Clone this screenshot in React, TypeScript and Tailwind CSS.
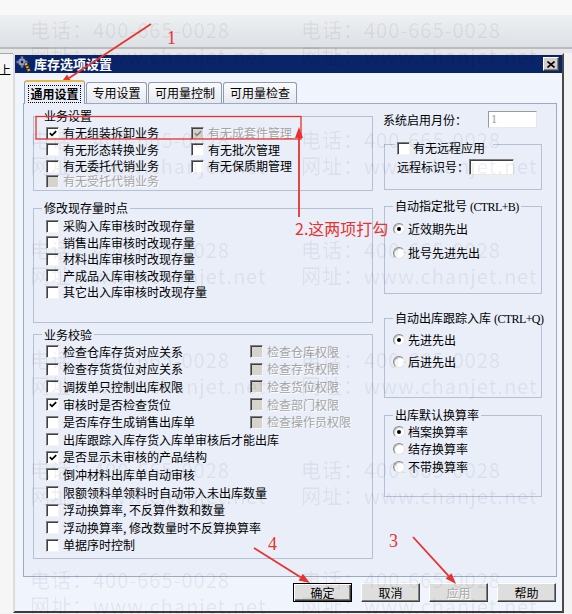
import React from 'react';

const RED = '#e8322e';

const Box: React.FC<{ checked?: boolean; disabled?: boolean }> = ({ checked, disabled }) => (
  <span
    className={`w-[13px] h-[13px] shrink-0 flex items-center justify-center border border-t-[#808080] border-l-[#808080] border-r-[#f4f4f4] border-b-[#f4f4f4] shadow-[inset_1px_1px_0_#404040] ${
      disabled ? 'bg-[#d6d3cc]' : 'bg-white'
    }`}
  >
    {checked && (
      <svg width="8" height="7" viewBox="0 0 8 7">
        <path d="M0.8 3.2 L3 5.4 L7.2 1.2" fill="none" stroke={disabled ? '#8a8a8a' : '#000'} strokeWidth="1.7" />
      </svg>
    )}
  </span>
);

const Check: React.FC<{ label: string; checked?: boolean; disabled?: boolean; className?: string }> = ({
  label,
  checked,
  disabled,
  className = '',
}) => (
  <div className={`flex items-center gap-[4px] whitespace-nowrap ${className}`}>
    <Box checked={checked} disabled={disabled} />
    <span className={disabled ? 'text-[#a3a3a3] [text-shadow:1px_1px_0_#fff]' : ''}>{label}</span>
  </div>
);

const Radio: React.FC<{ label: string; checked?: boolean; className?: string }> = ({ label, checked, className = '' }) => (
  <div className={`flex items-center gap-[3px] whitespace-nowrap ${className}`}>
    <span className="w-[12px] h-[12px] shrink-0 rounded-full bg-white border border-t-[#8a8a8a] border-l-[#8a8a8a] border-r-[#e4e4e4] border-b-[#e4e4e4] shadow-[inset_1px_1px_0_#c8c8c8] flex items-center justify-center">
      {checked && <span className="w-[4px] h-[4px] rounded-full bg-black" />}
    </span>
    <span>{label}</span>
  </div>
);

const Group: React.FC<{ title: React.ReactNode; className?: string; children: React.ReactNode }> = ({
  title,
  className = '',
  children,
}) => (
  <fieldset className={`border border-[#b3c0d6] min-w-0 ${className}`}>
    <legend className="ml-[8px] px-[2px] leading-[14px] whitespace-nowrap">{title}</legend>
    {children}
  </fieldset>
);

const Hotkey: React.FC<{ text: string; keys: string }> = ({ text, keys }) => (
  <span>
    {text}
    <span className="font-['Liberation_Serif',serif] text-[12px] tracking-[-0.6px] ml-[3px]">{keys}</span>
  </span>
);

const Button: React.FC<{ label: string; primary?: boolean; disabled?: boolean }> = ({ label, primary, disabled }) => (
  <div
    className={`w-[59px] h-[19px] flex items-center justify-center bg-[#dedede] ${
      primary
        ? 'border border-black shadow-[inset_1px_1px_0_#fff,inset_-1px_-1px_0_#404040,inset_-2px_-2px_0_#808080]'
        : 'border border-t-white border-l-white border-r-[#404040] border-b-[#404040] shadow-[inset_-1px_-1px_0_#808080]'
    } ${disabled ? 'text-[#a8a8a8] [text-shadow:1px_1px_0_#fff]' : 'text-black'}`}
  >
    {label}
  </div>
);

const checkRows: { label: string; checked?: boolean; h: string; right?: string }[] = [
  { label: '检查仓库存货对应关系', h: 'h-[17.6px]', right: '检查仓库权限' },
  { label: '检查存货货位对应关系', h: 'h-[17.6px]', right: '检查存货权限' },
  { label: '调拨单只控制出库权限', h: 'h-[17.6px]', right: '检查货位权限' },
  { label: '审核时是否检查货位', checked: true, h: 'h-[17.6px]', right: '检查部门权限' },
  { label: '是否库存生成销售出库单', h: 'h-[17.6px]', right: '检查操作员权限' },
  { label: '出库跟踪入库存货入库单审核后才能出库', h: 'h-[17.6px]' },
  { label: '是否显示未审核的产品结构', checked: true, h: 'h-[17.6px]' },
  { label: '倒冲材料出库单自动审核', h: 'h-[17.6px]' },
  { label: '限额领料单领料时自动带入未出库数量', h: 'h-[17.6px]' },
  { label: '浮动换算率, 不反算件数和数量', h: 'h-[17.6px]' },
  { label: '浮动换算率, 修改数量时不反算换算率', h: 'h-[17.6px]' },
  { label: '单据序时控制', h: 'h-[17.6px]' },
];

const stockRows = ['采购入库审核时改现存量', '销售出库审核时改现存量', '材料出库审核时改现存量', '产成品入库审核改现存量', '其它出入库审核时改现存量'];

const Arrow: React.FC<{ x1: number; y1: number; x2: number; y2: number }> = ({ x1, y1, x2, y2 }) => {
  const a = Math.atan2(y2 - y1, x2 - x1);
  const len = 11;
  const w = 4;
  const bx = x2 - len * Math.cos(a);
  const by = y2 - len * Math.sin(a);
  const px = -Math.sin(a) * w;
  const py = Math.cos(a) * w;
  return (
    <g>
      <line x1={x1} y1={y1} x2={bx} y2={by} stroke={RED} strokeWidth={1.8} />
      <polygon points={`${x2},${y2} ${bx + px},${by + py} ${bx - px},${by - py}`} fill={RED} />
    </g>
  );
};

const TitleIcon = () => (
  <svg width="16" height="16" viewBox="0 0 16 16">
    <g fill="#9aa3c8" stroke="#4a4f7a" strokeWidth="0.6">
      <rect x="5" y="0.5" width="2" height="2.5" />
      <rect x="5" y="9" width="2" height="2.5" />
      <rect x="0.5" y="5" width="2.5" height="2" />
      <rect x="9" y="5" width="2.5" height="2" />
      <circle cx="6" cy="6" r="3.8" />
    </g>
    <circle cx="6" cy="6" r="1.4" fill="#0a246a" />
    <g transform="rotate(-25 11.5 11.5)">
      <rect x="10" y="6.5" width="3" height="9" fill="#e9c23a" stroke="#3a2a10" strokeWidth="0.6" />
      <rect x="10" y="9" width="3" height="1.3" fill="#3a2a10" />
      <rect x="10" y="12" width="3" height="1.3" fill="#3a2a10" />
    </g>
  </svg>
);

const Watermark = () => (
  <div className="absolute inset-0 pointer-events-none flex flex-col pt-[17px] text-[20px] leading-[26px] tracking-[1px] text-black/[0.07] font-['Noto_Sans_CJK_SC',sans-serif]">
    {[0, 1, 2, 3, 4, 5].map((i) => (
      <div key={i} className="h-[110px] shrink-0 pl-[30px]">
        <div className="flex">
          <span className="w-[271px] shrink-0">电话：400-665-0028</span>
          <span>电话：400-665-0028</span>
        </div>
        <div className="flex">
          <span className="w-[271px] shrink-0">网址：www.chanjet.net</span>
          <span>网址：www.chanjet.net</span>
        </div>
      </div>
    ))}
  </div>
);

const Annotations = () => (
  <div className="absolute inset-0 pointer-events-none">
    <svg width="572" height="614" className="absolute inset-0">
      <rect x="36" y="116.5" width="265" height="22.5" fill="none" stroke={RED} strokeWidth="1.3" />
      <Arrow x1={151} y1={24} x2={60} y2={84} />
      <Arrow x1={299} y1={217} x2={299} y2={127} />
      <Arrow x1={413} y1={537} x2={456} y2={584} />
      <Arrow x1={254} y1={548} x2={310} y2={583} />
    </svg>
    <span className="absolute left-[167px] top-[28px] text-[18px] leading-[20px] font-['Liberation_Serif',serif] text-[#e8322e]">1</span>
    <span className="absolute left-[295px] top-[218px] text-[16px] leading-[20px] text-[#e8322e] font-['Noto_Sans_CJK_SC',sans-serif]">
      2.这两项打勾
    </span>
    <span className="absolute left-[389px] top-[531px] text-[18px] leading-[20px] font-['Liberation_Serif',serif] text-[#e8322e]">3</span>
    <span className="absolute left-[268px] top-[534px] text-[18px] leading-[20px] font-['Liberation_Serif',serif] text-[#e8322e]">4</span>
  </div>
);

export default function App() {
  return (
    <div className="relative w-[572px] h-[614px] overflow-hidden bg-[#f3f3f3] text-[12px] text-black font-['Noto_Sans_CJK_SC',sans-serif]">
      <div className="h-[15px] bg-[#f8f8f8]" />
      <div className="h-[32px] bg-linear-to-b from-[#eef0f2] to-[#dde1e5]" />
      <div className="h-[2px] bg-[#b8bcc0]" />
      <div className="h-[4px] bg-[#e7e7e7]" />

      <div className="flex">
        <div className="w-[13px] h-[560px] border-t border-[#a8a8a8] bg-[#f6f6f6] pt-[9px] leading-[14px] overflow-hidden">
          <span className="-ml-[1px]">上</span>
        </div>

        {/* dialog */}
        <div className="w-[551px] h-[560px] flex flex-col border-2 border-t-[#e4e4e4] border-l-[#dcdcdc] border-r-[#4a4a4a] border-b-[#3c3c3c] bg-[#f0f4fc]">
          <div className="h-[18px] shrink-0 bg-[#0a246a] flex items-center pl-[1px] pr-[3px]">
            <TitleIcon />
            <span className="ml-[2px] text-white font-bold text-[13px] leading-[18px]">库存选项设置</span>
            <div className="ml-auto w-[16px] h-[14px] bg-[#d4d0c8] border border-t-white border-l-white border-r-[#404040] border-b-[#404040] shadow-[inset_-1px_-1px_0_#808080] flex items-center justify-center">
              <svg width="8" height="7" viewBox="0 0 8 7">
                <path d="M0.5 0.5 L7.5 6.5 M7.5 0.5 L0.5 6.5" stroke="#000" strokeWidth="1.6" />
              </svg>
            </div>
          </div>

          <div className="flex-1 flex flex-col pl-[8px] pr-[5px] pt-[7px]">
            {/* tabs */}
            <div className="flex items-end gap-[1px] h-[23px] ml-[1px] relative z-10">
              <div className="w-[61px] h-[24px] -mb-[1px] bg-[#e9eef9] border border-b-0 border-[#919bae] border-t-2 border-t-[#e6b84a] rounded-t-[3px] flex items-center justify-center pt-[1px]">
                <span className="border border-dotted border-black px-[1px] font-bold leading-[16px]">通用设置</span>
              </div>
              <div className="w-[61px] h-[21px] bg-linear-to-b from-[#fbfbfd] to-[#e6e9f0] border border-b-0 border-[#919bae] rounded-t-[3px] flex items-center justify-center">
                专用设置
              </div>
              <div className="w-[74px] h-[21px] bg-linear-to-b from-[#fbfbfd] to-[#e6e9f0] border border-b-0 border-[#919bae] rounded-t-[3px] flex items-center justify-center">
                可用量控制
              </div>
              <div className="w-[74px] h-[21px] bg-linear-to-b from-[#fbfbfd] to-[#e6e9f0] border border-b-0 border-[#919bae] rounded-t-[3px] flex items-center justify-center">
                可用量检查
              </div>
            </div>

            {/* panel */}
            <div className="h-[474px] border border-[#9caac0] bg-[#e9eef9] flex gap-[11px] pl-[9px]">
              {/* left column */}
              <div className="w-[340px] flex flex-col pt-[5px]">
                <Group title="业务设置">
                  <div className="pl-[12px] pt-[2px] pb-[2px]">
                    <div className="flex h-[16px] items-center">
                      <Check label="有无组装拆卸业务" checked className="w-[145px]" />
                      <Check label="有无成套件管理" checked disabled />
                    </div>
                    <div className="flex h-[17px] items-center">
                      <Check label="有无形态转换业务" className="w-[145px]" />
                      <Check label="有无批次管理" />
                    </div>
                    <div className="flex h-[16px] items-center">
                      <Check label="有无委托代销业务" className="w-[145px]" />
                      <Check label="有无保质期管理" />
                    </div>
                    <div className="flex h-[14px] items-center">
                      <Check label="有无受托代销业务" disabled />
                    </div>
                  </div>
                </Group>

                <Group title="修改现存量时点" className="mt-[10px]">
                  <div className="pl-[12px] pt-[3px] pb-[21px]">
                    {stockRows.map((r) => (
                      <Check key={r} label={r} className="h-[16.5px]" />
                    ))}
                  </div>
                </Group>

                <Group title="业务校验" className="mt-[5px]">
                  <div className="pl-[12px] pt-[1.5px] pb-[4px]">
                    {checkRows.map((r) => (
                      <div key={r.label} className={`flex items-center ${r.h}`}>
                        <Check label={r.label} checked={r.checked} className="w-[204px]" />
                        {r.right && <Check label={r.right} disabled />}
                      </div>
                    ))}
                  </div>
                </Group>
              </div>

              {/* right column */}
              <div className="w-[158px] flex flex-col pt-[7px]">
                <div className="h-[17px] flex items-center justify-between pr-[5px] -ml-[1px]">
                  <span>系统启用月份：</span>
                  <span className="w-[49px] h-[17px] bg-white border border-t-[#9a9a9a] border-l-[#9a9a9a] border-r-[#e8e8e8] border-b-[#e8e8e8] text-[#9a9a9a] pl-[2px] leading-[15px] font-['Liberation_Serif',serif]">
                    1
                  </span>
                </div>

                <fieldset className="border border-[#b3c0d6] min-w-0 mt-[9px]">
                  <legend className="ml-[10px] pl-[2px] pr-[8px] leading-[14px] h-[14px]">
                    <span className="relative top-[4px] flex items-center gap-[3px]">
                      <Box />
                      <span>有无远程应用</span>
                    </span>
                  </legend>
                  <div className="pl-[12px] pt-[8px] pb-[14px]">
                    <div className="h-[16px] flex items-center">
                      <span>远程标识号：</span>
                      <span className="w-[45px] h-[16px] bg-white border border-t-[#808080] border-l-[#808080] border-r-[#e8e8e8] border-b-[#e8e8e8] shadow-[inset_1px_1px_0_#404040]" />
                    </div>
                  </div>
                </fieldset>

                <Group title={<Hotkey text="自动指定批号" keys="(CTRL+B)" />} className="mt-[9px]">
                  <div className="pl-[8px] pt-[7px] pb-[32px] flex flex-col gap-[8px]">
                    <Radio label="近效期先出" checked className="h-[16px]" />
                    <Radio label="批号先进先出" className="h-[16px]" />
                  </div>
                </Group>

                <Group title={<Hotkey text="自动出库跟踪入库" keys="(CTRL+Q)" />} className="mt-[17px]">
                  <div className="pl-[8px] pt-[6px] pb-[27px] flex flex-col gap-[6px]">
                    <Radio label="先进先出" checked className="h-[16px]" />
                    <Radio label="后进先出" className="h-[16px]" />
                  </div>
                </Group>

                <Group title="出库默认换算率" className="mt-[10px]">
                  <div className="pl-[8px] pt-[1px] pb-[20px] flex flex-col">
                    <Radio label="档案换算率" checked className="h-[17.5px]" />
                    <Radio label="结存换算率" className="h-[17.5px]" />
                    <Radio label="不带换算率" className="h-[17.5px]" />
                  </div>
                </Group>
              </div>
            </div>

            {/* buttons */}
            <div className="flex justify-end gap-[9px] mt-[6px] pr-[1px]">
              <Button label="确定" primary />
              <Button label="取消" />
              <Button label="应用" disabled />
              <Button label="帮助" />
            </div>
          </div>
        </div>
      </div>

      <Watermark />
      <Annotations />
    </div>
  );
}
